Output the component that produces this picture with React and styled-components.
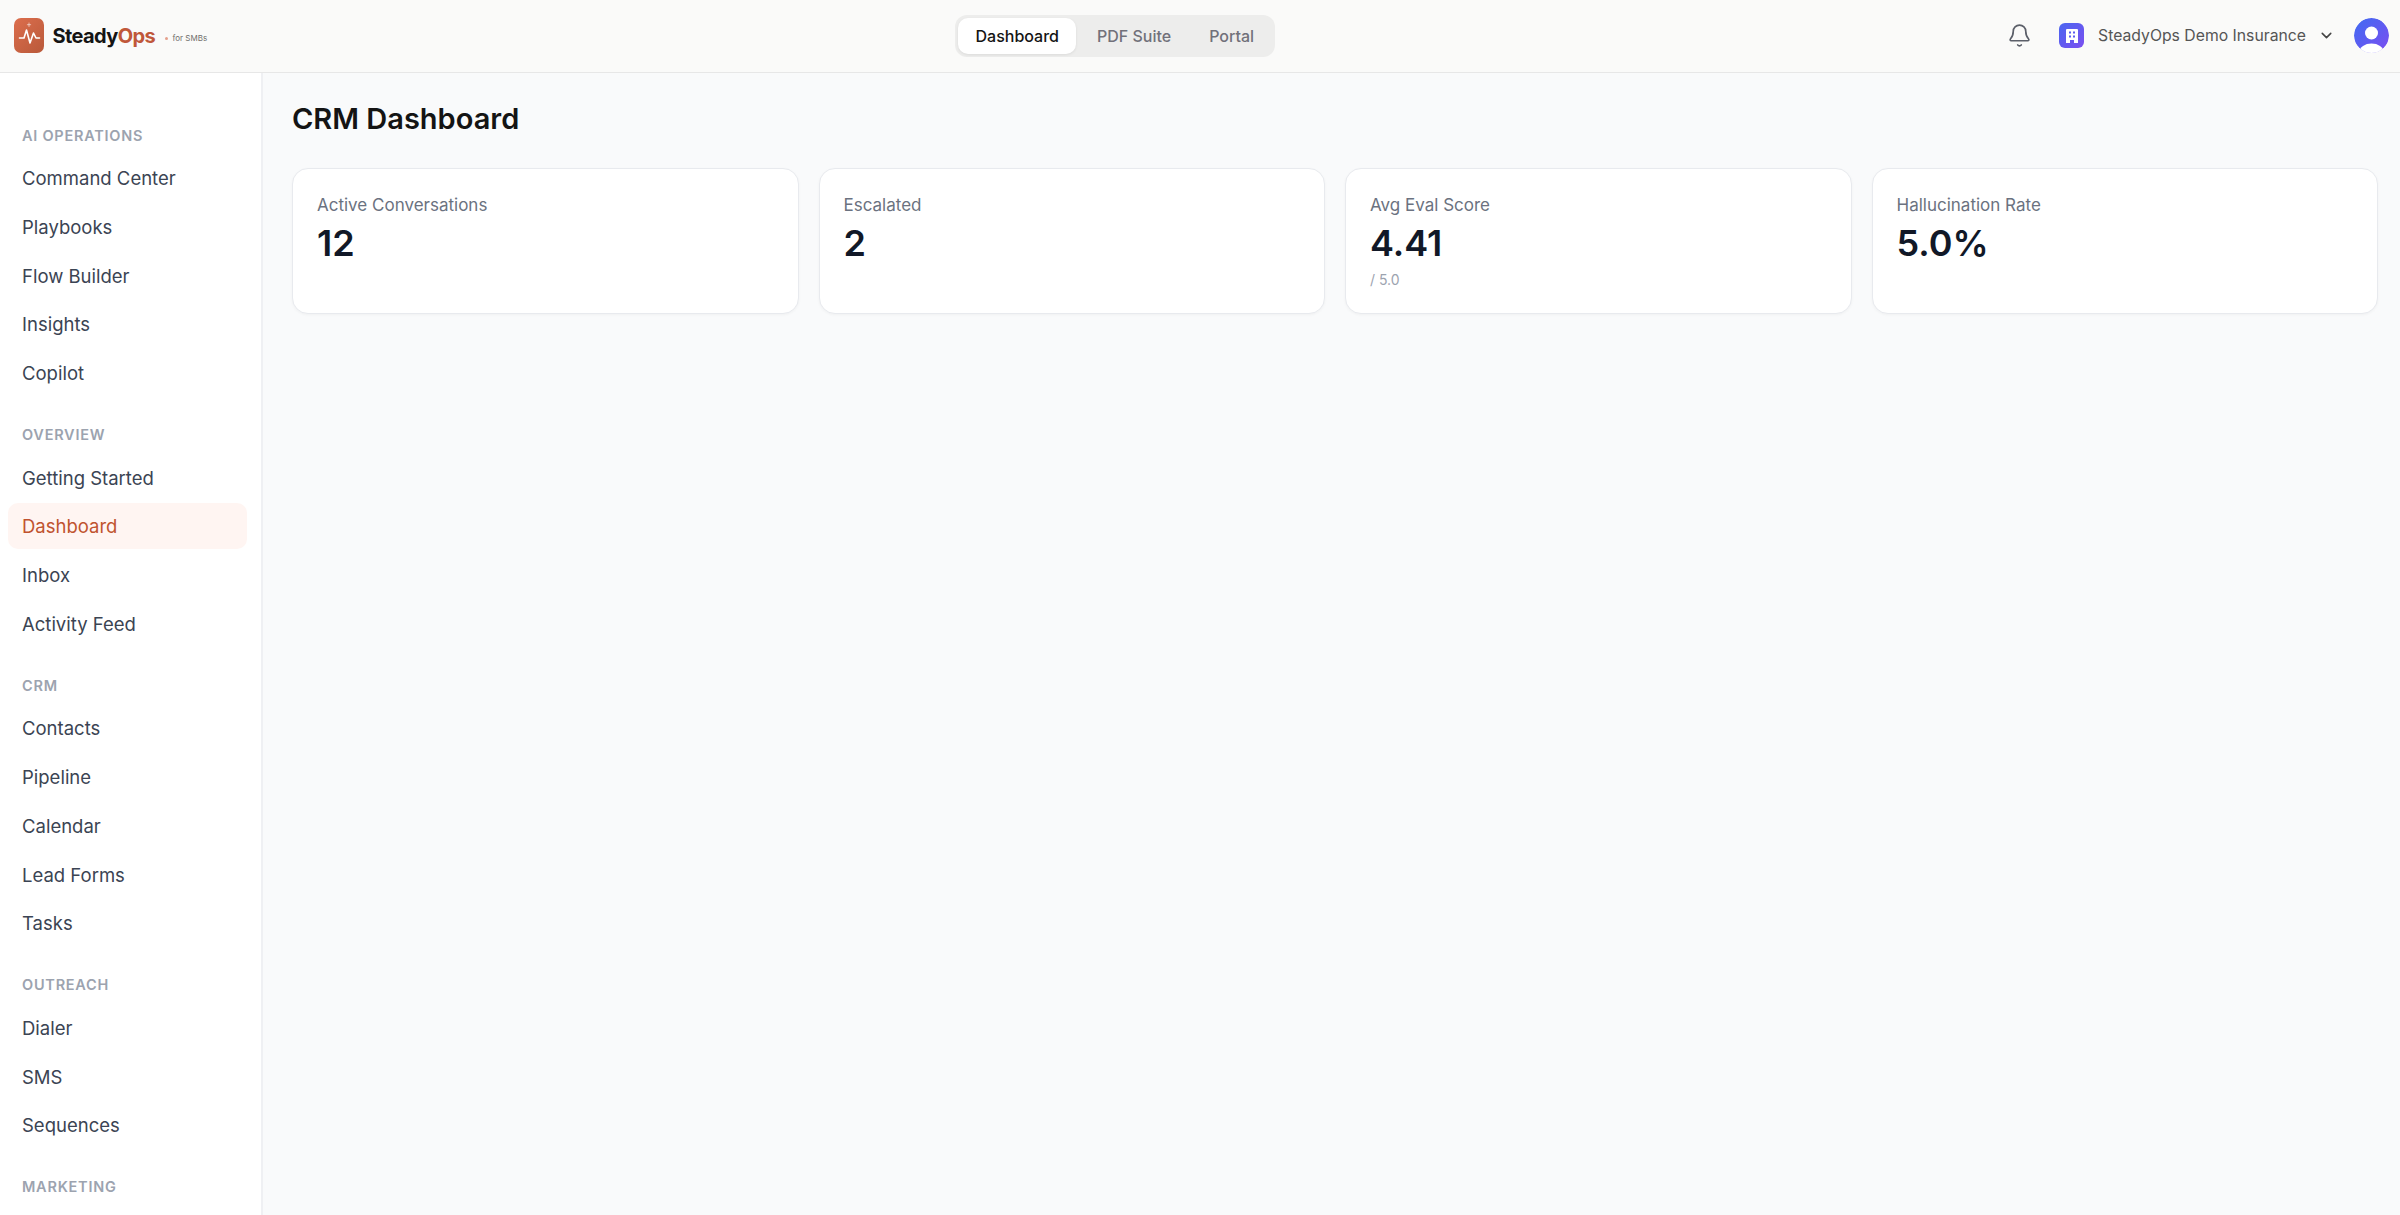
import React from 'react';
import styled, { createGlobalStyle } from 'styled-components';
import { Bell, ChevronDown } from 'lucide-react';

const navSections = [
  { label: 'AI Operations', items: ['Command Center', 'Playbooks', 'Flow Builder', 'Insights', 'Copilot'] },
  { label: 'Overview', items: ['Getting Started', 'Dashboard', 'Inbox', 'Activity Feed'] },
  { label: 'CRM', items: ['Contacts', 'Pipeline', 'Calendar', 'Lead Forms', 'Tasks'] },
  { label: 'Outreach', items: ['Dialer', 'SMS', 'Sequences'] },
  { label: 'Marketing', items: [] }
];

const stats = [
  { label: 'Active Conversations', value: '12' },
  { label: 'Escalated', value: '2' },
  { label: 'Avg Eval Score', value: '4.41', sub: '/ 5.0' },
  { label: 'Hallucination Rate', value: '5.0%' }
];

function LogoMark() {
  return (
    <LogoBox>
      <svg width="30" height="35" viewBox="0 0 30 35" fill="none" stroke="#fff" strokeLinecap="round" strokeLinejoin="round">
        <path d="M5.5 20H10l2.5-8 3.5 13 3.5-10 2.5 5h3.5" strokeWidth="1.6" />
        <path d="M15 5v3.5M13.3 6.700h3.4" strokeWidth="1" opacity="0.55" />
      </svg>
    </LogoBox>
  );
}

function OrgIcon() {
  return (
    <OrgBox>
      <svg width="12" height="14" viewBox="0 0 12 14" fill="#fff">
        <path d="M1 0h10a1 1 0 0 1 1 1v13H8v-3H4v3H0V1a1 1 0 0 1 1-1z" />
        <rect x="3" y="2.5" width="2" height="2" fill="#5b5cf0" />
        <rect x="7" y="2.5" width="2" height="2" fill="#5b5cf0" />
        <rect x="3" y="6.5" width="2" height="2" fill="#5b5cf0" />
        <rect x="7" y="6.5" width="2" height="2" fill="#5b5cf0" />
      </svg>
    </OrgBox>
  );
}

function Avatar() {
  return (
    <AvatarCircle>
      <svg width="35" height="35" viewBox="0 0 35 35">
        <defs>
          <linearGradient id="avatarFill" x1="0" y1="0" x2="1" y2="1">
            <stop offset="0" stopColor="#3f6bf2" />
            <stop offset="1" stopColor="#7c4df0" />
          </linearGradient>
        </defs>
        <circle cx="17.5" cy="17.5" r="17.5" fill="url(#avatarFill)" />
        <circle cx="17.5" cy="15" r="6.5" fill="#fff" />
        <ellipse cx="17.5" cy="34" rx="12" ry="8.5" fill="#fff" />
      </svg>
    </AvatarCircle>
  );
}

export default function App() {
  return (
    <Page>
      <GlobalStyle />
      <Header>
        <Brand>
          <LogoMark />
          <BrandName>
            Steady<span>Ops</span>
          </BrandName>
          <BrandDot />
          <BrandTag>for SMBs</BrandTag>
        </Brand>
        <Switcher>
          <SwitchTab $active>Dashboard</SwitchTab>
          <SwitchTab>PDF Suite</SwitchTab>
          <SwitchTab>Portal</SwitchTab>
        </Switcher>
        <HeaderRight>
          <Bell size={25} strokeWidth={1.6} color="#5b5f69" />
          <OrgSwitcher>
            <OrgIcon />
            <OrgName>SteadyOps Demo Insurance</OrgName>
            <ChevronDown size={17} strokeWidth={2.2} color="#444" />
          </OrgSwitcher>
          <Avatar />
        </HeaderRight>
      </Header>
      <Body>
        <Sidebar>
          {navSections.map(section => (
            <NavSection key={section.label}>
              <NavLabel>{section.label}</NavLabel>
              {section.items.map(item => (
                <NavItem key={item} $active={item === 'Dashboard'}>
                  {item}
                </NavItem>
              ))}
            </NavSection>
          ))}
        </Sidebar>
        <Main>
          <Title>CRM Dashboard</Title>
          <CardGrid>
            {stats.map(stat => (
              <Card key={stat.label}>
                <CardLabel>{stat.label}</CardLabel>
                <CardValue>{stat.value}</CardValue>
                {stat.sub && <CardSub>{stat.sub}</CardSub>}
              </Card>
            ))}
          </CardGrid>
        </Main>
      </Body>
    </Page>
  );
}

const GlobalStyle = createGlobalStyle`
  html, body {
    margin: 0;
    padding: 0;
    height: 100%;
    overflow: hidden;
    font-family: Inter, "Liberation Sans", sans-serif;
  }
  * {
    box-sizing: border-box;
  }
`;

const Page = styled.div`
  height: 100vh;
  display: flex;
  flex-direction: column;
  background: #f9fafb;
`;

const Header = styled.header`
  height: 73px;
  flex-shrink: 0;
  display: flex;
  align-items: center;
  padding: 0 11px 1px 14px;
  background: #fafaf9;
  border-bottom: 1.5px solid #e7e7e7;
`;

const Brand = styled.div`
  width: 941px;
  display: flex;
  align-items: center;
`;

const LogoBox = styled.div`
  width: 30px;
  height: 35px;
  border-radius: 7px;
  background: linear-gradient(135deg, #dc6e4d, #b9593a);

  svg {
    display: block;
  }
`;

const BrandName = styled.div`
  width: 103px;
  margin-left: 8.5px;
  font-size: 20px;
  font-weight: 700;
  letter-spacing: -0.6px;
  color: #141414;

  span {
    color: #c0573a;
  }
`;

const BrandDot = styled.span`
  width: 3px;
  height: 3px;
  margin: 6px 0 0 9px;
  border-radius: 50%;
  background: #e5a08c;
`;

const BrandTag = styled.span`
  margin: 5px 0 0 5px;
  font-size: 8px;
  color: #706f6c;
`;

const Switcher = styled.div`
  width: 320px;
  height: 42px;
  padding: 3px;
  display: flex;
  border-radius: 12px;
  background: #ededec;
`;

const SwitchTab = styled.div`
  height: 36px;
  margin-right: ${({ $active }) => ($active ? '1.5px' : '0')};
  padding: 0 ${({ $active }) => ($active ? '17.5px' : '19px')};
  display: flex;
  align-items: center;
  border-radius: 10px;
  font-size: 16px;
  font-weight: 500;
  white-space: nowrap;
  color: ${({ $active }) => ($active ? '#141414' : '#71717a')};
  background: ${({ $active }) => ($active ? '#fff' : 'transparent')};
  box-shadow: ${({ $active }) => ($active ? '0 1px 3px rgba(0, 0, 0, 0.08)' : 'none')};
`;

const HeaderRight = styled.div`
  margin-left: auto;
  display: flex;
  align-items: center;
`;

const OrgSwitcher = styled.div`
  margin: 0 19px 0 27.5px;
  display: flex;
  align-items: center;
`;

const OrgBox = styled.div`
  width: 25px;
  height: 25px;
  border-radius: 6px;
  background: linear-gradient(135deg, #4a66f0, #7b4ff0);
  display: flex;
  align-items: center;
  justify-content: center;
`;

const OrgName = styled.span`
  margin: 0 12px 0 14px;
  font-size: 15.75px;
  color: #555555;
`;

const AvatarCircle = styled.div`
  width: 35px;
  height: 35px;
  border-radius: 50%;
  overflow: hidden;

  svg {
    display: block;
  }
`;

const Body = styled.div`
  flex: 1;
  min-height: 0;
  display: flex;
`;

const Sidebar = styled.aside`
  width: 263px;
  flex-shrink: 0;
  padding: 50px 14.5px 0 8px;
  overflow: hidden;
  background: #fff;
  border-right: 2px solid #eff0f3;
`;

const NavSection = styled.section`
  margin-bottom: 26.5px;
`;

const NavLabel = styled.div`
  height: 24px;
  margin-bottom: 8px;
  padding-left: 14px;
  display: flex;
  align-items: center;
  font-size: 14.5px;
  font-weight: 600;
  letter-spacing: 0.75px;
  text-transform: uppercase;
  color: #9ca3af;
`;

const NavItem = styled.div`
  height: 46px;
  margin-bottom: 2.75px;
  padding-left: 14px;
  display: flex;
  align-items: center;
  border-radius: 10px;
  font-size: 18.5px;
  color: ${({ $active }) => ($active ? '#c0532f' : '#3b4453')};
  background: ${({ $active }) => ($active ? '#fff5f2' : 'transparent')};
`;

const Main = styled.main`
  flex: 1;
  min-width: 0;
  padding: 27px 22px 0 29px;
`;

const Title = styled.h1`
  margin: 0 0 30px;
  font-size: 29px;
  line-height: 38px;
  font-weight: 600;
  color: #141414;
`;

const CardGrid = styled.div`
  display: grid;
  grid-template-columns: repeat(4, 1fr);
  gap: 20px;
`;

const Card = styled.div`
  height: 146px;
  padding: 23.5px 24px;
  background: #fff;
  border: 1.5px solid #e8eaee;
  border-radius: 16px;
  box-shadow: 0 1px 3px rgba(0, 0, 0, 0.04);
`;

const CardLabel = styled.div`
  font-size: 17px;
  line-height: 24px;
  color: #6b7280;
`;

const CardValue = styled.div`
  margin-top: 4px;
  font-size: 36px;
  line-height: 44px;
  font-weight: 600;
  color: #111827;
`;

const CardSub = styled.div`
  margin-top: 5px;
  font-size: 14px;
  line-height: 20px;
  color: #9ca3af;
`;
